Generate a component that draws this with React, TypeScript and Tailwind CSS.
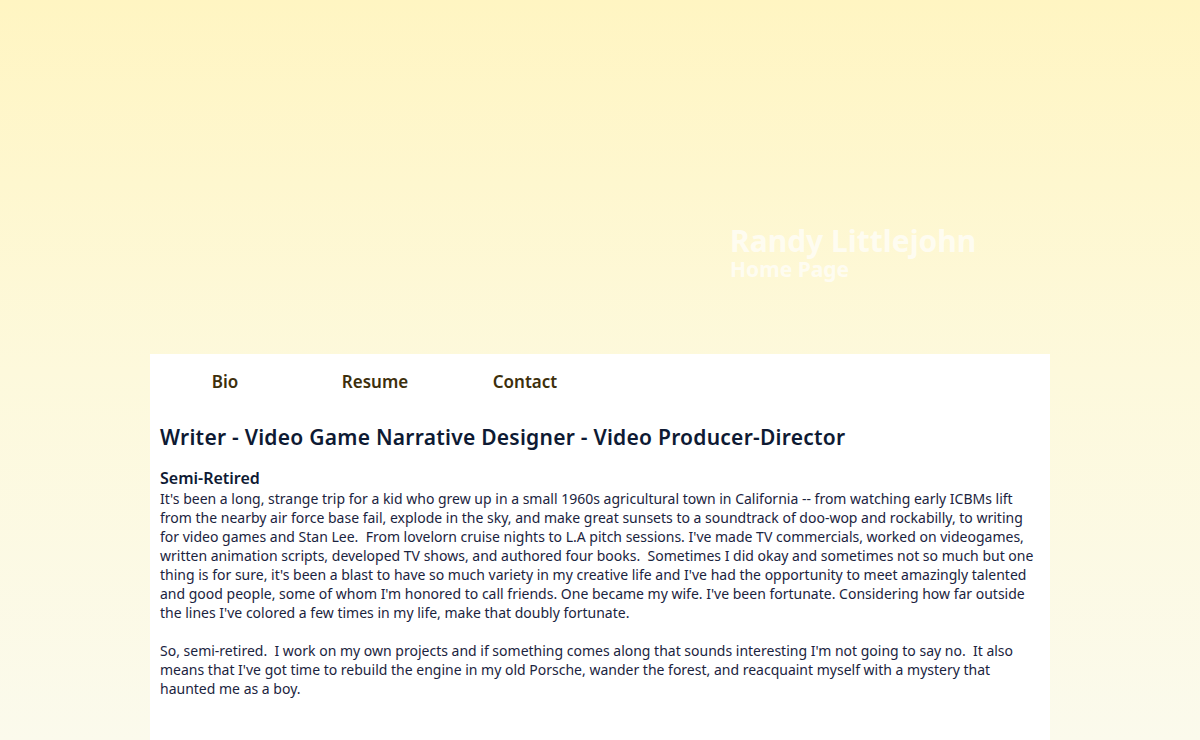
import React from 'react';

export default function App() {
  return (
    <div className="min-h-[740px] bg-gradient-to-b from-[#fff5c2] via-[#fdf9dc] to-[#fbfaec] font-['Noto_Sans',sans-serif]">
      <header className="h-[354px] flex flex-col pt-[226px] pl-[730px] font-['Liberation_Sans',sans-serif] font-bold text-white/70 leading-none">
        <div className="text-[30px]">Randy Littlejohn</div>
        <div className="text-[21px] mt-[3px]">Home Page</div>
      </header>
      <main className="mx-[150px] bg-white min-h-[386px] px-[10px] pb-10">
        <nav className="flex h-[56px] items-center text-[17px] font-semibold text-[#3d2f0c]">
          <a className="w-[130px] text-center">Bio</a>
          <a className="w-[170px] text-center">Resume</a>
          <a className="w-[130px] text-center">Contact</a>
        </nav>
        <h1 className="text-[21px] font-semibold text-[#0e1a33] mt-[12px] leading-[30px] tracking-[0.25px]">
          Writer - Video Game Narrative Designer - Video Producer-Director
        </h1>
        <h2 className="text-[16px] font-semibold text-[#0e1a33] mt-[16px] leading-[21px]">Semi-Retired</h2>
        <div className="text-[14px] leading-[19px] text-[#1b2440] tracking-[0px] w-[880px]">
          <p>
            It's been a long, strange trip for a kid who grew up in a small 1960s agricultural town in California -- from watching early ICBMs lift from the nearby air force base fail, explode in the sky, and make great sunsets to a soundtrack of doo-wop and rockabilly, to writing for video games and Stan Lee.&nbsp; From lovelorn cruise nights to L.A pitch sessions. I've made TV commercials, worked on videogames, written animation scripts, developed TV shows, and authored four books.&nbsp; Sometimes I did okay and sometimes not so much but one thing is for sure, it's been a blast to have so much variety in my creative life and I've had the opportunity to meet amazingly talented and good people, some of whom I'm honored to call friends. One became my wife. I've been fortunate. Considering how far outside the lines I've colored a few times in my life, make that doubly fortunate.
          </p>
          <p className="mt-[19px]">
            So, semi-retired.&nbsp; I work on my own projects and if something comes along that sounds interesting I'm not going to say no.&nbsp; It also means that I've got time to rebuild the engine in my old Porsche, wander the forest, and reacquaint myself with a mystery that haunted me as a boy.
          </p>
        </div>
      </main>
    </div>
  );
}
